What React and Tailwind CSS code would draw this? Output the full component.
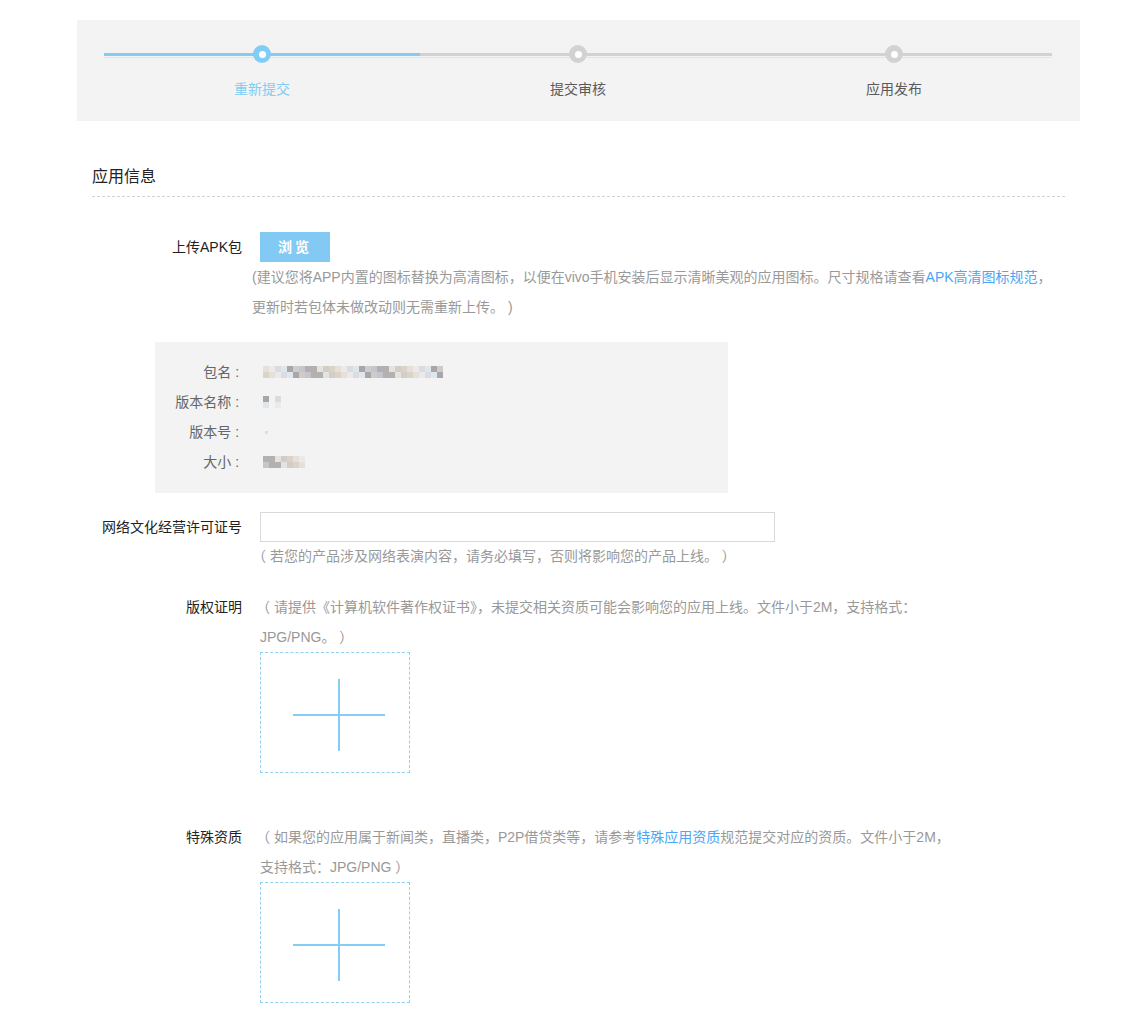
import React from 'react';

const steps = [
  { name: '重新提交', active: true },
  { name: '提交审核', active: false },
  { name: '应用发布', active: false },
];

const blurTones = [
  'bg-[#cfcbcb]', 'bg-[#e6e0d8]', 'bg-[#b3b0b3]', 'bg-[#d9dde2]', 'bg-[#e3e3e0]',
  'bg-[#a9a6a9]', 'bg-[#dcd3c8]', 'bg-[#c4c6cc]', 'bg-[#eaeaea]', 'bg-[#b5b0ae]',
  'bg-[#dfe7ec]', 'bg-[#d2cdc9]',
];

// pixelated placeholder for the masked values
const Pixels = ({ cols, rows = 2, seed = 0 }) => (
  <div className="flex flex-col">
    {Array.from({ length: rows }).map((_, r) => (
      <div key={r} className="flex">
        {Array.from({ length: cols }).map((_, c) => (
          <div key={c} className={`h-[6px] w-[6px] ${blurTones[(c * 7 + r * 5 + seed) % blurTones.length]}`} />
        ))}
      </div>
    ))}
  </div>
);

const UploadBox = () => (
  <div className="h-[121px] w-[150px] border border-dashed border-[#8fd0f3] pl-[32px] pt-[26px]">
    <svg width="92" height="72" viewBox="0 0 92 72">
      <line x1="0" y1="36" x2="92" y2="36" stroke="#86cdf5" strokeWidth="2" />
      <line x1="46" y1="0" x2="46" y2="72" stroke="#86cdf5" strokeWidth="2" />
    </svg>
  </div>
);

const Label = ({ children, className = '' }) => (
  <div className={`w-[150px] shrink-0 text-right text-[14px] text-[#222] ${className}`}>{children}</div>
);

const infoLabels = ['包名', '版本名称', '版本号', '大小'];

export default function App() {
  return (
    <div className="min-h-screen bg-white font-['Liberation_Sans','Noto_Sans_CJK_SC',sans-serif] pt-[20px]">
      <div className="ml-[77px] w-[1003px]">
        {/* Steps */}
        <div className="bg-[#f3f3f3] pl-[27px] pr-[28px] pt-[25px] pb-[22px]">
          <div className="grid grid-cols-3">
            {steps.map((s) => (
              <div key={s.name} className="flex flex-col items-center">
                <div className="relative flex h-[18px] w-full justify-center">
                  <div className="absolute left-0 right-0 top-[8px] h-[5px] border-b border-[#e4e4e4]">
                    <div className={`h-[3px] ${s.active ? 'bg-[#81cdf5]' : 'bg-[#d2d2d2]'}`} />
                  </div>
                  <div className={`relative flex h-[18px] w-[18px] items-center justify-center rounded-full ${s.active ? 'bg-[#81cdf5]' : 'bg-[#d2d2d2]'}`}>
                    <div className="h-[7px] w-[7px] rounded-full bg-white" />
                  </div>
                </div>
                <div className={`mt-[16px] text-[14px] leading-[20px] ${s.active ? 'text-[#81cdf5]' : 'text-[#5a5a5a]'}`}>{s.name}</div>
              </div>
            ))}
          </div>
        </div>

        {/* Form */}
        <div className="px-[15px]">
          <div className="mt-[44px] border-b border-dashed border-[#d3d3d3] pb-[7px] text-[16px] leading-[24px] text-[#222]">应用信息</div>

          <div className="mt-[35px] flex items-center gap-[18px]">
            <Label className="leading-[30px]">上传APK包</Label>
            <button className="h-[30px] w-[70px] bg-[#82caf3] text-[14px] font-bold tracking-[3px] text-white">浏览</button>
          </div>
          <div className="ml-[160px] whitespace-nowrap text-[14px] leading-[30px] text-[#999]">
            <div>(建议您将APP内置的图标替换为高清图标，以便在vivo手机安装后显示清晰美观的应用图标。尺寸规格请查看<span className="text-[#4ba6f5]">APK高清图标规范</span>，</div>
            <div>更新时若包体未做改动则无需重新上传。 )</div>
          </div>

          <div className="ml-[63px] mt-[20px] flex h-[151px] w-[573px] gap-[20px] bg-[#f3f3f3] pt-[15px] text-[14px] leading-[30px] text-[#666]">
            <div className="w-[88px] text-right">
              {infoLabels.map((l) => (
                <div key={l}>{l}&nbsp;:&nbsp;</div>
              ))}
            </div>
            <div className="flex flex-col">
              <div className="flex h-[30px] items-center"><Pixels cols={30} seed={1} /></div>
              <div className="flex h-[30px] items-center gap-[6px]"><Pixels cols={1} seed={5} /><Pixels cols={1} seed={3} /></div>
              <div className="flex h-[30px] items-center pl-[2px]"><div className="h-[3px] w-[3px] bg-[#f0d6d6]" /></div>
              <div className="flex h-[30px] items-center"><Pixels cols={7} seed={2} /></div>
            </div>
          </div>

          <div className="mt-[19px] flex items-center gap-[18px]">
            <Label className="leading-[30px]">网络文化经营许可证号</Label>
            <input className="h-[30px] w-[515px] border border-[#d9d9d9] bg-white outline-none" />
          </div>
          <div className="ml-[160px] whitespace-nowrap text-[14px] leading-[28px] text-[#999]">（ 若您的产品涉及网络表演内容，请务必填写，否则将影响您的产品上线。 ）</div>

          <div className="mt-[22px] flex gap-[18px]">
            <Label className="leading-[30px]">版权证明</Label>
            <div>
              <div className="whitespace-nowrap text-[14px] leading-[30px] text-[#999]">
                <div className="-ml-[4px]">（ 请提供《计算机软件著作权证书》，未提交相关资质可能会影响您的应用上线。文件小于2M，支持格式：</div>
                <div>JPG/PNG。 ）</div>
              </div>
              <UploadBox />
            </div>
          </div>

          <div className="mt-[49px] flex gap-[18px]">
            <Label className="leading-[30px]">特殊资质</Label>
            <div>
              <div className="whitespace-nowrap text-[14px] leading-[30px] text-[#999]">
                <div className="-ml-[4px]">（ 如果您的应用属于新闻类，直播类，P2P借贷类等，请参考<span className="text-[#4ba6f5]">特殊应用资质</span>规范提交对应的资质。文件小于2M，</div>
                <div>支持格式：JPG/PNG ）</div>
              </div>
              <UploadBox />
            </div>
          </div>
          <div className="h-[28px]" />
        </div>
      </div>
    </div>
  );
}
